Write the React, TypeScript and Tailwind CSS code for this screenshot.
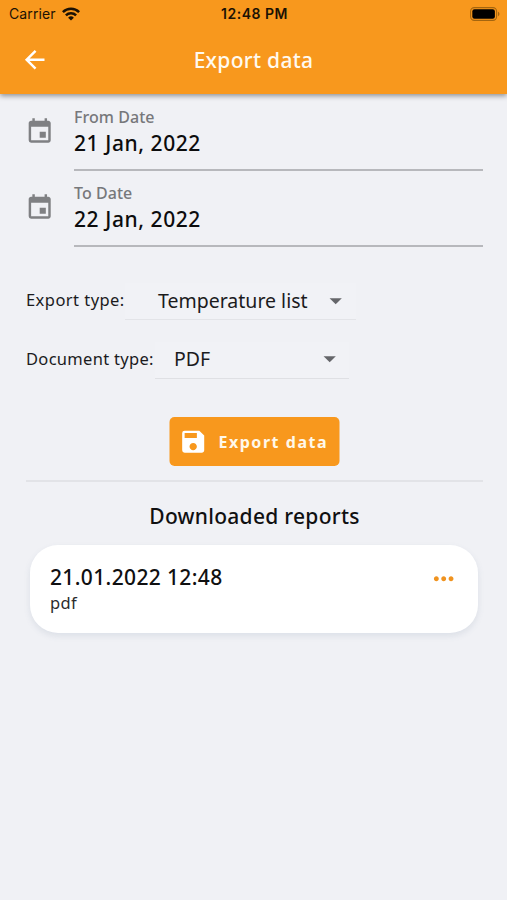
import { MdArrowBack, MdArrowDropDown, MdEvent, MdMoreHoriz, MdSave } from 'react-icons/md';

const DATES = [
  { label: 'From Date', value: '21 Jan, 2022' },
  { label: 'To Date', value: '22 Jan, 2022' },
];

const REPORTS = [{ title: '21.01.2022 12:48', type: 'pdf' }];

const StatusBar = () => (
  <div className="grid grid-cols-3 items-center h-[27px] pl-[9px] pr-[7px] font-['Inter',sans-serif] text-[14px] leading-none text-[#1c1204]">
    <div className="flex items-center gap-[6px]">
      <span className="tracking-[0.1px]">Carrier</span>
      <svg width="18" height="14" viewBox="0 0 18 14" fill="none" stroke="currentColor" strokeWidth="2.5">
        <path d="M0.9 5.1a11.5 11.5 0 0 1 16.2 0" />
        <path d="M3.9 8.3a7.2 7.2 0 0 1 10.2 0" />
        <path d="M9 13.6 6.1 10.7a4.1 4.1 0 0 1 5.8 0Z" fill="currentColor" stroke="none" />
      </svg>
    </div>
    <span className="text-center font-semibold tracking-[0.5px] whitespace-nowrap">12:48 PM</span>
    <svg className="justify-self-end" width="30" height="14" viewBox="0 0 30 14">
      <rect x="0.6" y="0.6" width="26" height="12.8" rx="3.8" fill="none" stroke="#a4650f" strokeWidth="1.1" />
      <rect x="2.3" y="2.3" width="22.6" height="9.4" rx="2.2" fill="#000" />
      <path d="M28 4.8c1.9.7 1.9 3.7 0 4.4z" fill="#a4650f" />
    </svg>
  </div>
);

const DateField = ({ label, value }: (typeof DATES)[number]) => (
  <div className="flex h-[76px]">
    <MdEvent className="mt-[14px] -ml-[1px] size-[29.4px] shrink-0 text-[#7f8083]" />
    <div className="ml-[19.6px] flex-1 h-[68px] border-b-2 border-[#b7b8bc]">
      <p className="mt-[3px] text-[16px] leading-[22px] font-medium tracking-[0.05px] text-[#77787b]">{label}</p>
      <p className="text-[21px] leading-[30px] font-medium tracking-[0.58px] text-[#0c0c0d]">{value}</p>
    </div>
  </div>
);

const App = () => {
  return (
    <div className="flex flex-col h-[900px] w-full overflow-hidden bg-[#f0f1f5] font-['Noto_Sans',sans-serif] text-[#1b1b1d]">
      <header className="h-[94px] shrink-0 bg-[#f8981d] shadow-[0_2px_5px_rgba(0,0,0,0.4)]">
        <StatusBar />
        <div className="grid grid-cols-[1fr_auto_1fr] items-center h-[66px] px-[20px]">
          <MdArrowBack className="size-[29.4px] text-white" />
          <h1 className="pt-[2px] text-[21px] font-medium tracking-[0.3px] text-[#fffaf0]">Export data</h1>
        </div>
      </header>

      <main className="pl-[26px] pr-[24px] pt-[9px]">
        {DATES.map((d) => (
          <DateField key={d.label} {...d} />
        ))}

        {/* Selects */}
        <div className="mt-[28px] flex h-[37px]">
          <span className="w-[99px] leading-[34px] text-[16.5px] tracking-[0.45px] whitespace-nowrap">Export type:</span>
          <div className="flex w-[231px] justify-between border-b border-[#e3e4e8] bg-[#f1f2f6] pl-[33px] pr-[6px]">
            <span className="text-[19.5px] leading-[35px] whitespace-nowrap">Temperature list</span>
            <MdArrowDropDown className="mt-[3px] size-[29.4px] text-[#65666a]" />
          </div>
        </div>
        <div className="mt-[22px] flex h-[37px]">
          <span className="w-[129px] leading-[34px] text-[16.5px] tracking-[0.3px] whitespace-nowrap">Document type:</span>
          <div className="flex w-[194px] justify-between border-b border-[#dfe0e4] bg-[#f1f2f6] pl-[19px] pr-[5px]">
            <span className="text-[19.5px] leading-[34px]">PDF</span>
            <MdArrowDropDown className="mt-[2px] size-[29.4px] text-[#65666a]" />
          </div>
        </div>

        <button className="mx-auto mt-[38px] flex h-[49px] w-[170px] -translate-x-[0.5px] items-center rounded-[5px] bg-[#f8981d] pl-[9.5px] text-[#fff8ea]">
          <MdSave className="size-[29.4px] shrink-0 text-white" />
          <span className="ml-[10.5px] text-[16px] font-bold tracking-[1.55px] whitespace-nowrap">Export data</span>
        </button>

        <div className="mt-[14px] h-[2px] bg-[#e2e3e7]" />

        <h2 className="mt-[19px] text-center text-[21px] leading-[30px] font-medium tracking-[0.28px] text-[#101011]">
          Downloaded reports
        </h2>

        {REPORTS.map((r) => (
          <div
            key={r.title}
            className="ml-[4px] mr-[5px] mt-[14px] flex h-[88px] justify-between rounded-[28px] bg-white pl-[20px] pr-[20px] shadow-[0_3px_6px_rgba(100,120,150,0.14)]"
          >
            <div className="pt-[17px]">
              <p className="text-[21px] leading-[30px] font-medium tracking-[0.36px] text-[#101011]">{r.title}</p>
              <p className="text-[16.5px] leading-[22px] tracking-[0.3px] text-[#2b2b2d]">{r.type}</p>
            </div>
            <MdMoreHoriz className="mt-[19px] size-[29.4px] text-[#f0931f]" />
          </div>
        ))}
      </main>
    </div>
  );
};

export default App;
